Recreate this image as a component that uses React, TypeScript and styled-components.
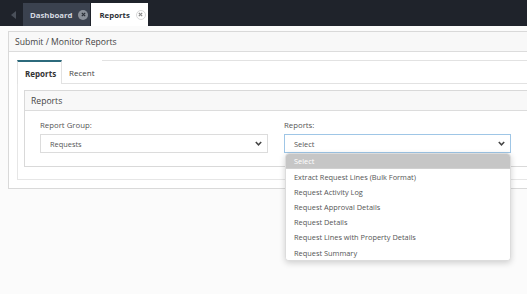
import React from "react";
import styled, { createGlobalStyle } from "styled-components";

const Global = createGlobalStyle`
  html, body { margin: 0; padding: 0; background: #fbfbfb; height: 100%; }
  body { font-family: "Open Sans", "Noto Sans", sans-serif; }
  #root { min-height: 100%; }
  * { box-sizing: border-box; }
`;

const Shell = styled.div`
  min-height: 294px;
`;

const TopBar = styled.div`
  height: 26px;
  background: #1f232b;
  display: flex;
  align-items: flex-end;
  padding-left: 4px;
`;

const Arrow = styled.div`
  width: 19px;
  height: 23px;
  display: flex;
  align-items: center;
  justify-content: center;
`;

const WinTab = styled.div<{ $active?: boolean }>`
  height: 23px;
  display: flex;
  align-items: center;
  gap: 6px;
  padding: 0 2px 0 ${(p) => (p.$active ? "8px" : "7px")};
  margin-right: 1px;
  font-size: 7.8px;
  font-weight: 700;
  background: ${(p) => (p.$active ? "#ffffff" : "#3b424f")};
  color: ${(p) => (p.$active ? "#2b2f36" : "#d6dae0")};
`;

const CloseDot = styled.span<{ $active?: boolean }>`
  width: 10px;
  height: 10px;
  border-radius: 50%;
  display: flex;
  align-items: center;
  justify-content: center;
  background: ${(p) => (p.$active ? "#ffffff" : "#8a9099")};
  border: ${(p) => (p.$active ? "1px solid #d8d8d8" : "none")};
`;

const Page = styled.div`
  padding: 5px 0 0 8px;
`;

const Panel = styled.div`
  border: 1px solid #d9d9d9;
  border-right: none;
  background: #ffffff;
`;

const PanelHeader = styled.div`
  height: 20px;
  background: #f8f8f8;
  border-bottom: 1px solid #dcdcdc;
  display: flex;
  align-items: center;
  padding-left: 6px;
  font-size: 8.6px;
  color: #444;
`;

const PanelBody = styled.div`
  padding: 8px 0 8px 8px;
`;

const TabStrip = styled.div`
  display: flex;
  height: 24px;
  border-top: 1px solid #e2e2e2;
  border-bottom: 1px solid #e2e2e2;
`;

const InnerTab = styled.div<{ $active?: boolean }>`
  display: flex;
  align-items: center;
  padding: 0 7px;
  width: ${(p) => (p.$active ? "45px" : "auto")};
  font-size: 8px;
  font-weight: ${(p) => (p.$active ? 700 : 400)};
  color: ${(p) => (p.$active ? "#333" : "#444")};
  background: #fff;
  margin-top: -1px;
  border-top: ${(p) => (p.$active ? "2px solid #2c6a7c" : "1px solid transparent")};
  border-left: ${(p) => (p.$active ? "1px solid #e2e2e2" : "none")};
  border-right: ${(p) => (p.$active ? "1px solid #e2e2e2" : "none")};
  margin-bottom: ${(p) => (p.$active ? "-1px" : "0")};
`;

const TabContent = styled.div`
  border-left: 1px solid #e6e6e6;
  border-bottom: 1px solid #e6e6e6;
  padding: 6px 0 12px 6px;
`;

const Box = styled.div`
  border: 1px solid #d9d9d9;
  border-right: none;
`;

const BoxHeader = styled.div`
  height: 20px;
  background: #f8f8f8;
  border-bottom: 1px solid #dcdcdc;
  display: flex;
  align-items: center;
  padding-left: 6px;
  font-size: 8.6px;
  color: #444;
`;

const FieldsRow = styled.div`
  display: grid;
  grid-template-columns: 228px 227px;
  column-gap: 16px;
  padding: 9px 0 13px 15px;
`;

const Field = styled.div`
  position: relative;
  display: flex;
  flex-direction: column;
  gap: 3px;
`;

const Label = styled.div`
  font-size: 7.8px;
  color: #555;
  height: 11px;
  line-height: 11px;
`;

const SelectBox = styled.div<{ $focus?: boolean }>`
  height: 19px;
  border: 1px solid ${(p) => (p.$focus ? "#9fc6e6" : "#dcdcdc")};
  background: #fff;
  display: flex;
  align-items: center;
  justify-content: space-between;
  padding: 0 5px 0 9px;
  font-size: 7.4px;
  color: #555;
`;

const Menu = styled.div`
  position: absolute;
  top: 33px;
  left: 1px;
  width: 226px;
  background: #fff;
  border: 1px solid #dcdcdc;
  border-radius: 4px;
  box-shadow: 0 2px 6px rgba(0, 0, 0, 0.18);
  overflow: hidden;
  z-index: 10;
`;

const MenuItem = styled.div<{ $selected?: boolean }>`
  height: ${(p) => (p.$selected ? "15px" : "15.2px")};
  display: flex;
  align-items: center;
  padding-left: 8px;
  font-size: 7.4px;
  color: ${(p) => (p.$selected ? "#ffffff" : "#555")};
  background: ${(p) => (p.$selected ? "#c6c6c6" : "#fff")};
  border-bottom: ${(p) => (p.$selected ? "1px solid #d0d0d0" : "none")};
`;

const Chevron = () => (
  <svg width="7" height="5" viewBox="0 0 7 5">
    <path d="M0.8 1 L3.5 3.8 L6.2 1" fill="none" stroke="#444" strokeWidth="1.5" />
  </svg>
);

const X = ({ color }: { color: string }) => (
  <svg width="5" height="5" viewBox="0 0 5 5">
    <path d="M0.8 0.8 L4.2 4.2 M4.2 0.8 L0.8 4.2" stroke={color} strokeWidth="1.2" />
  </svg>
);

const items = [
  "Extract Request Lines (Bulk Format)",
  "Request Activity Log",
  "Request Approval Details",
  "Request Details",
  "Request Lines with Property Details",
  "Request Summary",
];

export default function App() {
  return (
    <Shell>
      <Global />
      <TopBar>
        <Arrow>
          <svg width="5" height="8" viewBox="0 0 5 8">
            <path d="M5 0 L0 4 L5 8 Z" fill="#4a505a" />
          </svg>
        </Arrow>
        <WinTab>
          Dashboard
          <CloseDot>
            <X color="#2a2f37" />
          </CloseDot>
        </WinTab>
        <WinTab $active>
          Reports
          <CloseDot $active>
            <X color="#888" />
          </CloseDot>
        </WinTab>
      </TopBar>
      <Page>
        <Panel>
          <PanelHeader>Submit / Monitor Reports</PanelHeader>
          <PanelBody>
            <TabStrip>
              <InnerTab $active>Reports</InnerTab>
              <InnerTab>Recent</InnerTab>
            </TabStrip>
            <TabContent>
              <Box>
                <BoxHeader>Reports</BoxHeader>
                <FieldsRow>
                  <Field>
                    <Label>Report Group:</Label>
                    <SelectBox>
                      Requests
                      <Chevron />
                    </SelectBox>
                  </Field>
                  <Field>
                    <Label>Reports:</Label>
                    <SelectBox $focus>
                      Select
                      <Chevron />
                    </SelectBox>
                    <Menu>
                      <MenuItem $selected>Select</MenuItem>
                      {items.map((t) => (
                        <MenuItem key={t}>{t}</MenuItem>
                      ))}
                    </Menu>
                  </Field>
                </FieldsRow>
              </Box>
            </TabContent>
          </PanelBody>
        </Panel>
      </Page>
    </Shell>
  );
}
